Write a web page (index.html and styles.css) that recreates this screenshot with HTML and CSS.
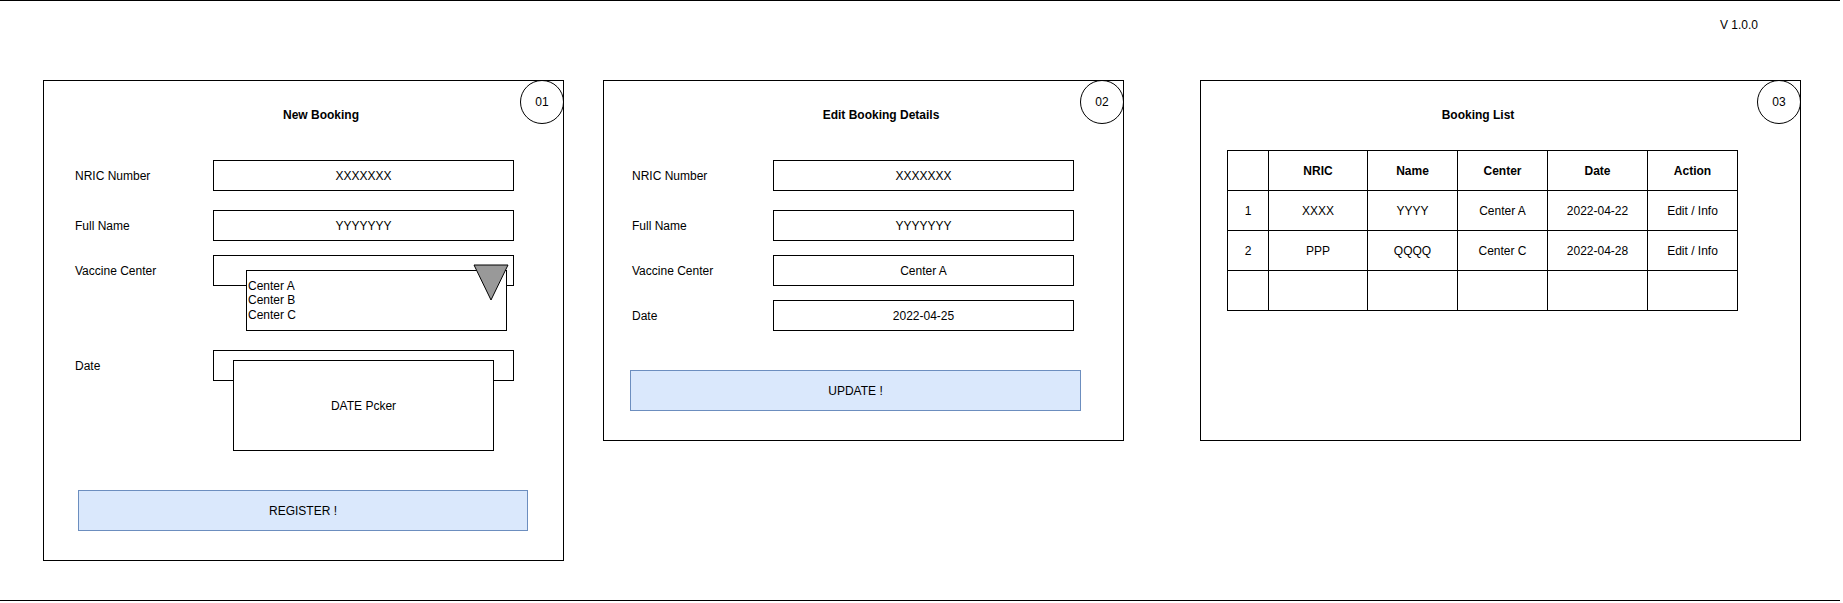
FILE: index.html
```html
<!DOCTYPE html>
<html lang="en">
<head>
<meta charset="utf-8">
<title>Vaccine Booking Wireframe</title>
<link rel="stylesheet" href="styles.css">
</head>
<body>
<div class="page">
  <header class="topbar"><span class="version">V 1.0.0</span></header>
  <main class="board">
    <section class="panel panel-new">
      <div class="badge">01</div>
      <h2 class="panel-title">New Booking</h2>
      <div class="form form-new">
        <div class="field field-first"><span class="label">NRIC Number</span><div class="input">XXXXXXX</div></div>
        <div class="field field-gap19"><span class="label">Full Name</span><div class="input">YYYYYYY</div></div>
        <div class="field field-gap14"><span class="label">Vaccine Center</span>
          <div class="input">
            <div class="dropdown-list"><span>Center A</span><span>Center B</span><span>Center C</span></div>
            <svg class="dropdown-arrow" viewBox="0 0 36 37" width="36" height="37"><polygon points="1,1 35,1 18,36" fill="#999999" stroke="#000" stroke-width="1"/></svg>
          </div>
        </div>
        <div class="field field-gap64"><span class="label">Date</span>
          <div class="input"><div class="date-picker">DATE Pcker</div></div>
        </div>
      </div>
      <div class="btn btn-register">REGISTER !</div>
    </section>

    <section class="panel panel-edit">
      <div class="badge">02</div>
      <h2 class="panel-title">Edit Booking Details</h2>
      <div class="form form-edit">
        <div class="field field-first"><span class="label">NRIC Number</span><div class="input">XXXXXXX</div></div>
        <div class="field field-gap19"><span class="label">Full Name</span><div class="input">YYYYYYY</div></div>
        <div class="field field-gap14"><span class="label">Vaccine Center</span><div class="input">Center A</div></div>
        <div class="field field-gap14"><span class="label">Date</span><div class="input">2022-04-25</div></div>
      </div>
      <div class="btn btn-update">UPDATE !</div>
    </section>

    <section class="panel panel-list">
      <div class="badge">03</div>
      <h2 class="panel-title">Booking List</h2>
      <div class="table" role="table">
        <div class="cell head"></div>
        <div class="cell head">NRIC</div>
        <div class="cell head">Name</div>
        <div class="cell head">Center</div>
        <div class="cell head">Date</div>
        <div class="cell head">Action</div>

        <div class="cell">1</div>
        <div class="cell">XXXX</div>
        <div class="cell">YYYY</div>
        <div class="cell">Center A</div>
        <div class="cell">2022-04-22</div>
        <div class="cell">Edit / Info</div>

        <div class="cell">2</div>
        <div class="cell">PPP</div>
        <div class="cell">QQQQ</div>
        <div class="cell">Center C</div>
        <div class="cell">2022-04-28</div>
        <div class="cell">Edit / Info</div>

        <div class="cell"></div>
        <div class="cell"></div>
        <div class="cell"></div>
        <div class="cell"></div>
        <div class="cell"></div>
        <div class="cell"></div>
      </div>
    </section>
  </main>
</div>
</body>
</html>
```

FILE: styles.css
```css
body {
  margin: 0;
  font-family: "Liberation Sans", Arial, sans-serif;
  font-size: 12px;
  color: #000;
  background: #fff;
}

.page {
  width: 1840px;
  height: 601px;
  box-sizing: border-box;
  border-top: 1px solid #000;
  border-bottom: 1px solid #000;
}

.topbar {
  height: 79px;
  box-sizing: border-box;
  padding-top: 17px;
  padding-right: 82px;
  display: flex;
  justify-content: flex-end;
  line-height: 14px;
}

.board {
  display: flex;
  align-items: flex-start;
  padding-left: 43px;
}

.panel {
  position: relative;
  box-sizing: border-box;
  border: 1px solid #000;
}

.panel-new {
  width: 521px;
  height: 481px;
}

.panel-edit {
  width: 521px;
  height: 361px;
  margin-left: 39px;
}

.panel-list {
  width: 601px;
  height: 361px;
  margin-left: 76px;
}

.badge {
  position: absolute;
  top: -1px;
  right: -1px;
  width: 44px;
  height: 44px;
  box-sizing: border-box;
  border: 1px solid #000;
  border-radius: 50%;
  display: flex;
  align-items: center;
  justify-content: center;
  line-height: 14px;
}

.panel-title {
  margin: 27px 0 0 77px;
  width: 400px;
  text-align: center;
  font-size: 12px;
  font-weight: bold;
  line-height: 14px;
}

.form {
  display: flex;
  flex-direction: column;
}

.field {
  display: flex;
  align-items: center;
  height: 31px;
}

.field-first { margin-top: 38px; }
.field-gap19 { margin-top: 19px; }
.field-gap14 { margin-top: 14px; }
.field-gap64 { margin-top: 64px; }

.label {
  line-height: 14px;
}

.form-new .label {
  margin-left: 31px;
  width: 138px;
}

.form-edit .label {
  margin-left: 28px;
  width: 141px;
}

.input {
  position: relative;
  width: 301px;
  height: 31px;
  box-sizing: border-box;
  border: 1px solid #000;
  display: flex;
  align-items: center;
  justify-content: center;
  line-height: 14px;
}

.dropdown-list {
  position: absolute;
  left: 32px;
  top: 14px;
  width: 261px;
  height: 61px;
  box-sizing: border-box;
  border: 1px solid #000;
  background: #fff;
  padding-left: 1px;
  display: flex;
  flex-direction: column;
  justify-content: center;
  align-items: flex-start;
  line-height: 14.4px;
}

.dropdown-arrow {
  position: absolute;
  left: 259px;
  top: 8px;
  width: 36px;
  height: 37px;
  display: block;
}

.date-picker {
  position: absolute;
  left: 19px;
  top: 9px;
  width: 261px;
  height: 91px;
  box-sizing: border-box;
  border: 1px solid #000;
  background: #fff;
  display: flex;
  align-items: center;
  justify-content: center;
}

.btn {
  height: 41px;
  box-sizing: border-box;
  background: #dae8fc;
  border: 1px solid #6c8ebf;
  display: flex;
  align-items: center;
  justify-content: center;
  line-height: 14px;
}

.btn-register {
  width: 450px;
  margin: 109px 0 0 34px;
}

.btn-update {
  width: 451px;
  margin: 39px 0 0 26px;
}

.table {
  margin: 28px 0 0 26px;
  width: max-content;
  display: grid;
  grid-template-columns: 41px 99px 90px 90px 100px 90px;
  grid-auto-rows: 40px;
  border-left: 1px solid #000;
  border-top: 1px solid #000;
}

.cell {
  box-sizing: border-box;
  border-right: 1px solid #000;
  border-bottom: 1px solid #000;
  display: flex;
  align-items: center;
  justify-content: center;
  line-height: 14px;
}

.cell.head {
  font-weight: bold;
}
```
